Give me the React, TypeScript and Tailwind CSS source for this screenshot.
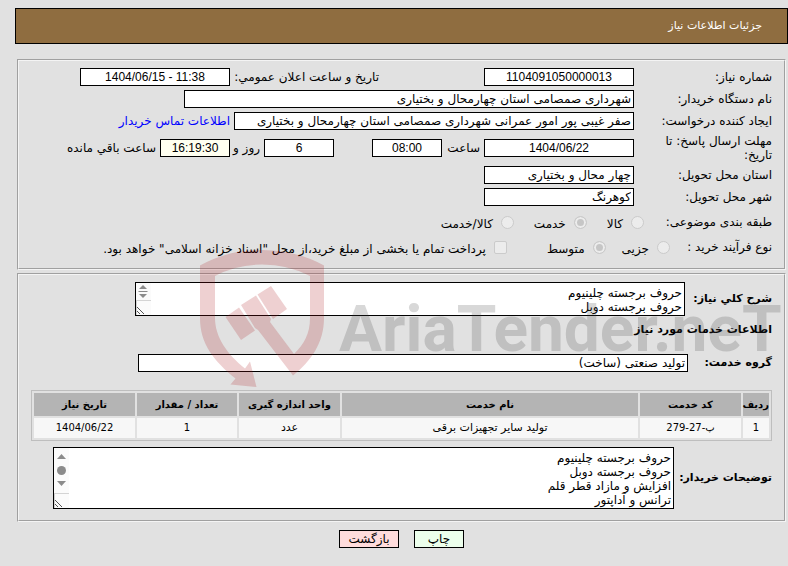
import type { ReactNode } from "react";
import clsx from "clsx";

const services = [
  {
    row: "1",
    code: "پ-27-279",
    name: "تولید سایر تجهیزات برقی",
    unit: "عدد",
    amount: "1",
    date: "1404/06/22",
  },
];

function Label({ htmlFor, children }: { htmlFor?: string; children: ReactNode }) {
  return (
    <label htmlFor={htmlFor} className="w-[138px] shrink-0 pl-4">
      {children}
    </label>
  );
}

function Field({
  id,
  value,
  className,
  numeric,
  label,
}: {
  id: string;
  value: string;
  className: string;
  numeric?: boolean;
  label?: string;
}) {
  return (
    <input
      id={id}
      aria-label={label}
      readOnly
      defaultValue={value}
      dir={numeric ? "ltr" : "rtl"}
      className={clsx(
        "h-[18px] min-w-0 border border-black px-0.5",
        numeric ? "text-center font-['Liberation_Sans','DejaVu_Sans',sans-serif]" : "text-right",
        className
      )}
    />
  );
}

function Choice({
  name,
  text,
  type = "radio",
  checked,
}: {
  name: string;
  text: string;
  type?: "radio" | "checkbox";
  checked?: boolean;
}) {
  return (
    <label className="flex items-center gap-2">
      <input
        type={type}
        name={name}
        disabled
        defaultChecked={checked}
        className={clsx(
          "size-[13px] appearance-none border border-[#cbcbcb]",
          type === "radio" ? "rounded-full" : "rounded-xs",
          checked ? "bg-[#c6c6c6] shadow-[inset_0_0_0_2px_#ececec]" : "bg-[#ececec]"
        )}
      />
      <span className="pt-1">{text}</span>
    </label>
  );
}

function ScrollBar({ thumb }: { thumb: "line" | "dot" }) {
  return (
    <div className="absolute top-px bottom-px left-px flex w-[15px] flex-col justify-between bg-[#fbfbfb]">
      <svg
        className="w-full"
        height={thumb === "dot" ? 45 : 17}
        fill="#8b8b8b"
        aria-hidden="true"
      >
        {thumb === "dot" ? (
          <>
            <path d="M3 11h9L7.500 6z" />
            <circle cx="7.500" cy="22.500" r="4.500" />
            <path d="M3 33h9l-4.500 5z" />
          </>
        ) : (
          <path d="M3 6h8L7 2zM2.500 8h9v1h-9zM3 11h8l-4 4z" />
        )}
      </svg>
      <svg className="w-full border-t border-l border-[#d4d4d4]" height="15" aria-hidden="true">
        <path d="M0 6l7 7M0 10l3 3" stroke="#555" fill="none" />
      </svg>
    </div>
  );
}

function Watermark() {
  return (
    <svg
      className="pointer-events-none absolute top-[240px] left-[190px] [direction:ltr]"
      width="598"
      height="150"
      viewBox="0 0 598 150"
      aria-hidden="true"
    >
      <g fill="#aa1418" fillOpacity="0.2">
        <path
          fillRule="evenodd"
          d="M10 25.500Q38 10 72 10Q106 10 134 25.500V78C134 103 121 121 103 135.500L68 90L65 88L51 65L66 55.500L81 79L80 82L104 114C114 104 120 94 120 78V36Q98 24.500 72 24.500Q46 24.500 25 36V78C25 97 37 114 55 128.500L60 121.500L66.500 147L40.500 144.500L45.500 138.500C24 121 10 104 10 78Z"
        />
        <path d="M35.500 77L49 67.500L65 90.500L51 100Z" />
        <path d="M67.500 54.500L81 46L97 69L83 79Z" />
      </g>
      <text
        x="149"
        y="111"
        fill="#3c3c3c"
        fillOpacity="0.2"
        className="font-['Roboto',sans-serif] text-[64px] font-bold"
      >
        AriaTender.neT
      </text>
    </svg>
  );
}

export default function App() {
  return (
    <div
      dir="rtl"
      className="relative min-h-screen bg-[#e1e1e1] pt-2 pb-4 pl-[15px] font-['DejaVu_Sans',sans-serif] text-[12px] leading-[14px] text-black"
    >
      <header className="flex h-9 items-center border border-black bg-[#8f6d40] px-[25px] text-[11px] text-white">
        <h1>جزئیات اطلاعات نیاز</h1>
      </header>

      <fieldset className="mt-[15px] mr-[2px] ml-[2px] flex h-[211px] flex-col gap-1 border-2 border-[#f4f4f4] [border-style:groove] px-3 pt-[7px]">
        <div className="flex items-center">
          <Label htmlFor="number">شماره نیاز:</Label>
          <Field id="number" value="1104091050000013" numeric className="w-[150px] bg-white" />
          <label htmlFor="announced" className="mr-[105px] w-[149px] whitespace-nowrap">
            تاریخ و ساعت اعلان عمومي:
          </label>
          <Field id="announced" value="1404/06/15 - 11:38" numeric className="w-[150px] bg-white" />
        </div>
        <div className="flex items-center">
          <Label htmlFor="org">نام دستگاه خریدار:</Label>
          <Field id="org" value="شهرداری صمصامی استان چهارمحال و بختیاری" className="w-[450px] bg-white" />
        </div>
        <div className="flex items-center">
          <Label htmlFor="creator">ایجاد کننده درخواست:</Label>
          <Field
            id="creator"
            value="صفر غیبی پور امور عمرانی شهرداری صمصامی استان چهارمحال و بختیاری"
            className="w-[400px] bg-white"
          />
          <a href="#contact" className="mr-1 text-[#0000ff]">
            اطلاعات تماس خریدار
          </a>
        </div>
        <div className="flex h-7 items-center">
          <Label htmlFor="deadline">مهلت ارسال پاسخ: تا تاریخ:</Label>
          <Field id="deadline" value="1404/06/22" numeric className="w-[150px] bg-white" />
          <label htmlFor="hour" className="w-[42px] pr-1">
            ساعت
          </label>
          <Field id="hour" value="08:00" numeric className="w-[70px] bg-white" />
          <Field id="days" label="روز" value="6" numeric className="mr-[38px] w-[70px] bg-white" />
          <label htmlFor="days" className="w-[34px] pr-1 whitespace-nowrap">
            روز و
          </label>
          <Field id="left" value="16:19:30" numeric className="w-[70px] bg-[#fffff0]" />
          <label htmlFor="left" className="pr-1">
            ساعت باقي مانده
          </label>
        </div>
        <div className="flex items-center">
          <Label htmlFor="province">استان محل تحویل:</Label>
          <Field id="province" value="چهار محال و بختیاری" className="w-[150px] bg-white" />
        </div>
        <div className="flex items-center">
          <Label htmlFor="city">شهر محل تحویل:</Label>
          <Field id="city" value="کوهرنگ" className="w-[150px] bg-white" />
        </div>
        <div className="flex h-6 items-center">
          <span className="w-[128px] shrink-0">طبقه بندی موضوعی:</span>
          <div className="flex gap-5">
            <Choice name="subject" text="کالا" />
            <Choice name="subject" text="خدمت" checked />
            <Choice name="subject" text="کالا/خدمت" />
          </div>
        </div>
        <div className="flex items-center">
          <span className="w-[102px] shrink-0">نوع فرآیند خرید :</span>
          <div className="flex gap-4">
            <Choice name="process" text="جزیی" />
            <Choice name="process" text="متوسط" checked />
          </div>
          <div className="mr-10 whitespace-nowrap">
            <Choice
              name="treasury"
              type="checkbox"
              text={'پرداخت تمام یا بخشی از مبلغ خرید،از محل "اسناد خزانه اسلامی" خواهد بود.'}
            />
          </div>
        </div>
      </fieldset>

      <fieldset className="mt-[3px] mr-[2px] ml-[2px] border-2 border-[#f4f4f4] [border-style:groove] px-3 pt-[7px] pb-[11px]">
        <div className="flex items-center">
          <label htmlFor="summary" className="w-[87px] text-[11px] font-bold">
            شرح کلي نیاز:
          </label>
          <div className="relative w-[550px]">
            <textarea
              id="summary"
              readOnly
              defaultValue={"حروف برجسته چلینیوم\nحروف برجسته دوبل"}
              className="block h-[34px] w-full resize-none overflow-hidden border border-black bg-white px-0.5 pt-[3px]"
            />
            <ScrollBar thumb="line" />
          </div>
        </div>
        <h2 className="mt-[7px] text-[11px] font-bold">اطلاعات خدمات مورد نیاز</h2>
        <div className="mt-[17px] flex items-center">
          <label htmlFor="group" className="w-[84px] text-[11px] font-bold">
            گروه خدمت:
          </label>
          <Field id="group" value="تولید صنعتی (ساخت)" className="w-[550px] bg-white" />
        </div>

        <table className="mt-[18px] w-full table-fixed border-separate border-spacing-[2px] border border-[#bebebe] text-center text-[10px]">
          <thead>
            <tr className="h-[23px] bg-[#b4b4b4]">
              <th className="w-[26px]">ردیف</th>
              <th className="w-[101px]">کد خدمت</th>
              <th>نام خدمت</th>
              <th className="w-[101px]">واحد اندازه گیری</th>
              <th className="w-[100px]">تعداد / مقدار</th>
              <th className="w-[101px]">تاریخ نیاز</th>
            </tr>
          </thead>
          <tbody>
            {services.map((s) => (
              <tr key={s.row} className="h-5 bg-[#f7f7f7]">
                <td>{s.row}</td>
                <td>{s.code}</td>
                <td className="text-[11px]">{s.name}</td>
                <td className="text-[11px]">{s.unit}</td>
                <td>{s.amount}</td>
                <td>{s.date}</td>
              </tr>
            ))}
          </tbody>
        </table>

        <div className="mt-1.5 flex items-center">
          <label htmlFor="notes" className="w-[98px] text-[11px] font-bold">
            توضیحات خریدار:
          </label>
          <div className="relative w-[621px]">
            <textarea
              id="notes"
              readOnly
              defaultValue={"حروف برجسته چلینیوم\nحروف برجسته دوبل\nافزایش و مازاد قطر قلم\nترانس و آداپتور"}
              className="block h-[62px] w-full resize-none overflow-hidden border border-black bg-white px-0.5 pt-[3px]"
            />
            <ScrollBar thumb="dot" />
          </div>
        </div>
      </fieldset>

      <div className="mt-2 flex justify-center gap-[15px]">
        <button type="button" className="h-[18px] w-[50px] border border-black bg-[#ecffec]">
          چاپ
        </button>
        <button type="button" className="h-[18px] w-[60px] border border-black bg-[#ffdcdc]">
          بازگشت
        </button>
      </div>

      <Watermark />
    </div>
  );
}
